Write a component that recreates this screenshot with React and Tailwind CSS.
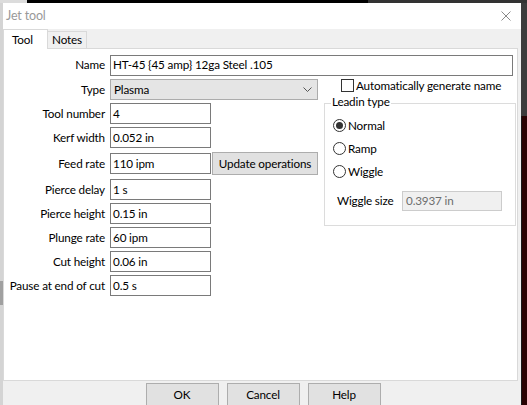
import React from 'react';

const font = { fontFamily: 'Lato, "Liberation Sans", sans-serif' };

const Field = ({ label, value, wide, className = '' }) => (
  <div className={`flex items-center h-[21px] ${className}`}>
    <div className="w-[101px] mr-[5px] text-right leading-none whitespace-nowrap">{label}</div>
    <div className={`h-[21px] border border-[#7a7a7a] bg-white flex items-center pl-[2px] whitespace-nowrap ${wide ? 'flex-1' : 'w-[101px]'}`}>
      {value}
    </div>
  </div>
);

const Radio = ({ label, checked }) => (
  <div className="flex items-center h-[23px]">
    <div className="w-[13px] h-[13px] rounded-full border border-[#333333] bg-white flex items-center justify-center mr-[2px]">
      {checked && <div className="w-[7px] h-[7px] rounded-full bg-[#333333]" />}
    </div>
    <span>{label}</span>
  </div>
);

const Button = ({ children, className = '' }) => (
  <div className={`h-[23px] bg-[#e1e1e1] border border-[#adadad] flex items-center justify-center whitespace-nowrap ${className}`}>
    {children}
  </div>
);

export default function App() {
  return (
    <div className="w-[527px] h-[405px] overflow-hidden flex flex-col bg-[#2b2b2b] text-[11.7px] tracking-[-0.15px] text-black" style={font}>
      {/* desktop strip above the window */}
      <div className="h-[3px] flex shrink-0">
        <div className="w-[27px] bg-[#dcdcdc]" />
        <div className="w-[341px] bg-black" />
        <div className="flex-1 bg-[#333333]" />
      </div>

      <div className="flex flex-1 min-h-0">
        {/* left edge behind dialog */}
        <div className="w-[3px] flex flex-col bg-[#d4d4d4]">
          <div className="h-[278px]" />
          <div className="h-[24px] bg-[#a0a0a0]" />
        </div>

        {/* dialog */}
        <div className="w-[518px] flex flex-col bg-[#f0f0f0]">
          {/* title bar */}
          <div className="h-[26px] bg-white flex items-center justify-between pl-[3px] pr-[10px] shrink-0">
            <span className="text-[#999999] text-[12.5px]">Jet tool</span>
            <svg width="10" height="10" viewBox="0 0 10 10">
              <path d="M0.5 0.5L9.5 9.5M9.5 0.5L0.5 9.5" stroke="#8a8a8a" strokeWidth="1" />
            </svg>
          </div>

          {/* tabs */}
          <div className="h-[19px] flex items-end shrink-0 relative z-10">
            <div className="w-[45px] h-[20px] -mb-[1px] bg-white border border-b-0 border-[#d9d9d9] flex items-center pl-[8px]">
              Tool
            </div>
            <div className="w-[39px] h-[17px] bg-[#f0f0f0] border border-l-0 border-b-0 border-[#d9d9d9] flex items-center justify-center">
              Notes
            </div>
          </div>

          {/* tab panel */}
          <div className="h-[333px] w-[515px] bg-white border border-[#d9d9d9] shrink-0 pt-[5px] pr-[4px] flex flex-col">
            <Field label="Name" value="HT-45 {45 amp} 12ga Steel .105" wide className="h-[22px]" />

            <div className="flex mt-[3px]">
              {/* left column */}
              <div className="w-[314px] flex flex-col gap-[3px]">
                <div className="flex items-center h-[21px]">
                  <div className="w-[101px] mr-[5px] text-right leading-none">Type</div>
                  <div className="flex-1 h-[21px] bg-[#e5e5e5] border border-[#acacac] flex items-center justify-between pl-[3px] pr-[5px]">
                    <span>Plasma</span>
                    <svg width="9" height="5" viewBox="0 0 9 5">
                      <path d="M0.5 0.5L4.5 4.5L8.5 0.5" stroke="#555555" strokeWidth="1" fill="none" />
                    </svg>
                  </div>
                </div>
                <Field label="Tool number" value="4" />
                <Field label="Kerf width" value="0.052 in" />
                <div className="flex items-center mt-[1px]">
                  <Field label="Feed rate" value="110 ipm" />
                  <Button className="ml-[1px] flex-1 h-[21px]">Update operations</Button>
                </div>
                <Field label="Pierce delay" value="1 s" className="mt-[1px]" />
                <Field label="Pierce height" value="0.15 in" />
                <Field label="Plunge rate" value="60 ipm" />
                <Field label="Cut height" value="0.06 in" />
                <Field label="Pause at end of cut" value="0.5 s" />
              </div>

              {/* right column */}
              <div className="flex-1 ml-[6px] -mr-[3px] flex flex-col">
                <div className="flex items-center h-[13px] pl-[17px] whitespace-nowrap">
                  <div className="w-[13px] h-[13px] border border-[#333333] bg-white mr-[2px]" />
                  <span className="leading-none">Automatically generate name</span>
                </div>
                <div className="mt-[11px] h-[123px] border border-[#dcdcdc] relative pl-[8px] pt-[10px]">
                  <span className="absolute -top-[8px] left-[6px] bg-white px-[1px] leading-none">Leadin type</span>
                  <Radio label="Normal" checked />
                  <Radio label="Ramp" />
                  <Radio label="Wiggle" />
                  <div className="flex items-center mt-[8px] pl-[4px] whitespace-nowrap">
                    <span className="w-[65px]">Wiggle size</span>
                    <div className="w-[100px] h-[20px] border border-[#cccccc] bg-[#f0f0f0] text-[#6d6d6d] flex items-center pl-[3px]">
                      0.3937 in
                    </div>
                  </div>
                </div>
              </div>
            </div>
          </div>

          {/* footer buttons */}
          <div className="flex justify-center gap-[8px] pt-[2px] pl-[2px]">
            <Button className="w-[73px]">OK</Button>
            <Button className="w-[73px]">Cancel</Button>
            <Button className="w-[73px]">Help</Button>
          </div>
        </div>

        {/* right edge */}
        <div className="flex-1 flex flex-col">
          <div className="h-[113px] bg-[#3c3c3c]" />
          <div className="flex-1 bg-[#2a0303] border-l border-[#1a1a1a]" />
        </div>
      </div>
    </div>
  );
}
